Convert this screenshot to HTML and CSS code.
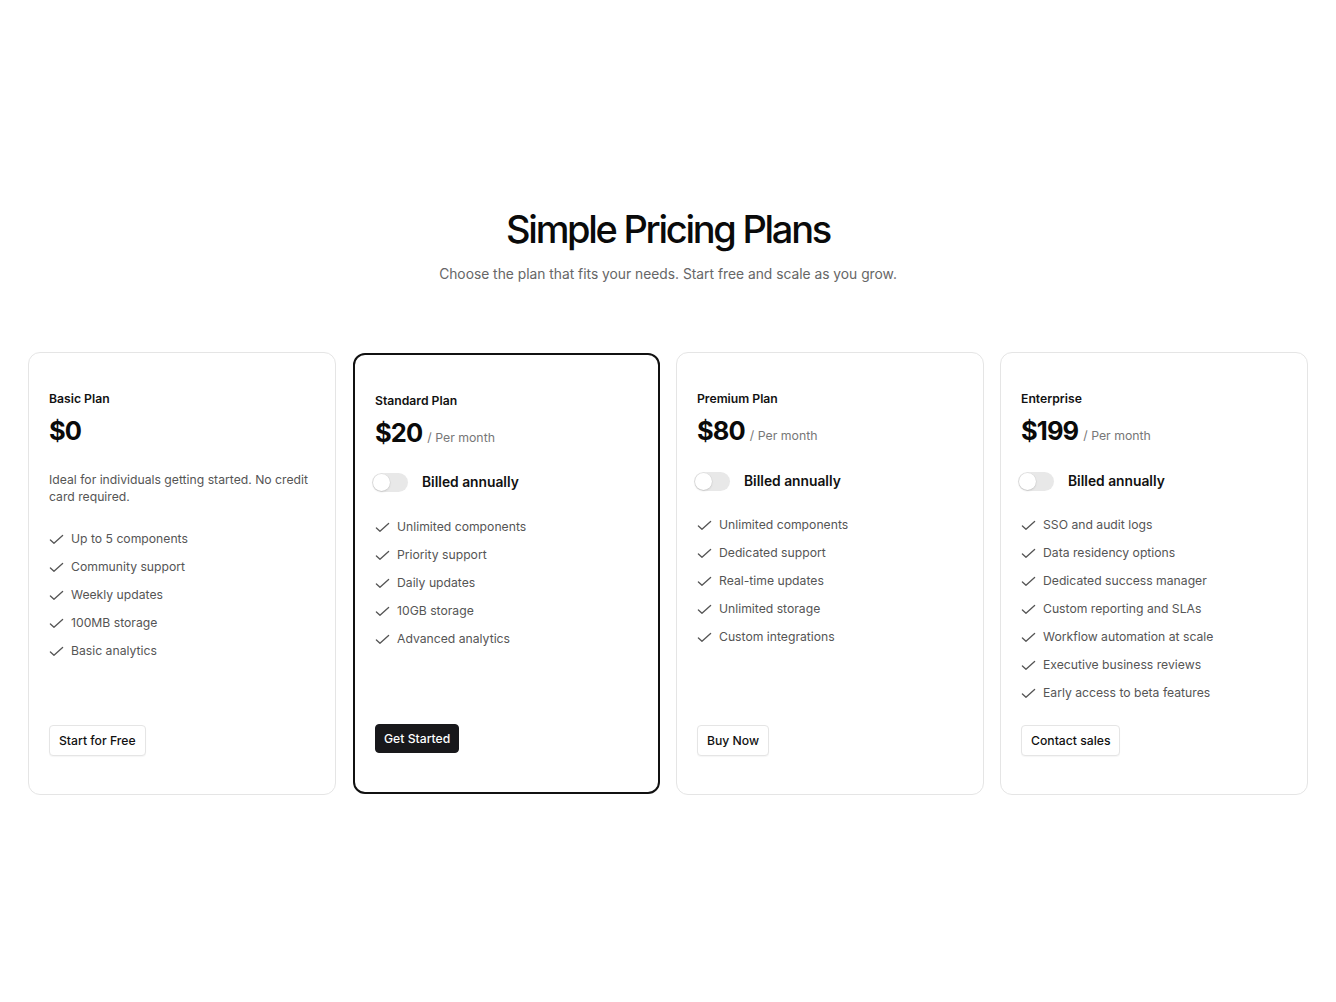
FILE: index.html
```html
<!DOCTYPE html>
<html lang="en">
<head>
<meta charset="utf-8">
<title>Simple Pricing Plans</title>
<link rel="stylesheet" href="styles.css">
</head>
<body>
<main class="page">
  <header class="hero">
    <h1 class="hero-title">Simple Pricing Plans</h1>
    <p class="hero-sub">Choose the plan that fits your needs. Start free and scale as you grow.</p>
  </header>
  <section class="plans">
    <article class="card card-basic">
      <h2 class="plan-name">Basic Plan</h2>
      <div class="price-row"><span class="price">$0</span></div>
      <p class="desc">Ideal for individuals getting started. No credit card required.</p>
      <ul class="features">
        <li><svg class="check" viewBox="0 0 16 16"><path d="M1.5 8.5l3.8 3.6L14.5 3.8"/></svg>Up to 5 components</li>
        <li><svg class="check" viewBox="0 0 16 16"><path d="M1.5 8.5l3.8 3.6L14.5 3.8"/></svg>Community support</li>
        <li><svg class="check" viewBox="0 0 16 16"><path d="M1.5 8.5l3.8 3.6L14.5 3.8"/></svg>Weekly updates</li>
        <li><svg class="check" viewBox="0 0 16 16"><path d="M1.5 8.5l3.8 3.6L14.5 3.8"/></svg>100MB storage</li>
        <li><svg class="check" viewBox="0 0 16 16"><path d="M1.5 8.5l3.8 3.6L14.5 3.8"/></svg>Basic analytics</li>
      </ul>
      <div class="actions"><button class="btn btn-outline">Start for Free</button></div>
    </article>
    <article class="card card-featured">
      <h2 class="plan-name">Standard Plan</h2>
      <div class="price-row"><span class="price">$20</span><span class="period">/ Per month</span></div>
      <label class="billing"><span class="switch"><span class="knob"></span></span><span class="billing-label">Billed annually</span></label>
      <ul class="features">
        <li><svg class="check" viewBox="0 0 16 16"><path d="M1.5 8.5l3.8 3.6L14.5 3.8"/></svg>Unlimited components</li>
        <li><svg class="check" viewBox="0 0 16 16"><path d="M1.5 8.5l3.8 3.6L14.5 3.8"/></svg>Priority support</li>
        <li><svg class="check" viewBox="0 0 16 16"><path d="M1.5 8.5l3.8 3.6L14.5 3.8"/></svg>Daily updates</li>
        <li><svg class="check" viewBox="0 0 16 16"><path d="M1.5 8.5l3.8 3.6L14.5 3.8"/></svg>10GB storage</li>
        <li><svg class="check" viewBox="0 0 16 16"><path d="M1.5 8.5l3.8 3.6L14.5 3.8"/></svg>Advanced analytics</li>
      </ul>
      <div class="actions"><button class="btn btn-solid">Get Started</button></div>
    </article>
    <article class="card">
      <h2 class="plan-name">Premium Plan</h2>
      <div class="price-row"><span class="price">$80</span><span class="period">/ Per month</span></div>
      <label class="billing"><span class="switch"><span class="knob"></span></span><span class="billing-label">Billed annually</span></label>
      <ul class="features">
        <li><svg class="check" viewBox="0 0 16 16"><path d="M1.5 8.5l3.8 3.6L14.5 3.8"/></svg>Unlimited components</li>
        <li><svg class="check" viewBox="0 0 16 16"><path d="M1.5 8.5l3.8 3.6L14.5 3.8"/></svg>Dedicated support</li>
        <li><svg class="check" viewBox="0 0 16 16"><path d="M1.5 8.5l3.8 3.6L14.5 3.8"/></svg>Real-time updates</li>
        <li><svg class="check" viewBox="0 0 16 16"><path d="M1.5 8.5l3.8 3.6L14.5 3.8"/></svg>Unlimited storage</li>
        <li><svg class="check" viewBox="0 0 16 16"><path d="M1.5 8.5l3.8 3.6L14.5 3.8"/></svg>Custom integrations</li>
      </ul>
      <div class="actions"><button class="btn btn-outline">Buy Now</button></div>
    </article>
    <article class="card">
      <h2 class="plan-name">Enterprise</h2>
      <div class="price-row"><span class="price">$199</span><span class="period">/ Per month</span></div>
      <label class="billing"><span class="switch"><span class="knob"></span></span><span class="billing-label">Billed annually</span></label>
      <ul class="features">
        <li><svg class="check" viewBox="0 0 16 16"><path d="M1.5 8.5l3.8 3.6L14.5 3.8"/></svg>SSO and audit logs</li>
        <li><svg class="check" viewBox="0 0 16 16"><path d="M1.5 8.5l3.8 3.6L14.5 3.8"/></svg>Data residency options</li>
        <li><svg class="check" viewBox="0 0 16 16"><path d="M1.5 8.5l3.8 3.6L14.5 3.8"/></svg>Dedicated success manager</li>
        <li><svg class="check" viewBox="0 0 16 16"><path d="M1.5 8.5l3.8 3.6L14.5 3.8"/></svg>Custom reporting and SLAs</li>
        <li><svg class="check" viewBox="0 0 16 16"><path d="M1.5 8.5l3.8 3.6L14.5 3.8"/></svg>Workflow automation at scale</li>
        <li><svg class="check" viewBox="0 0 16 16"><path d="M1.5 8.5l3.8 3.6L14.5 3.8"/></svg>Executive business reviews</li>
        <li><svg class="check" viewBox="0 0 16 16"><path d="M1.5 8.5l3.8 3.6L14.5 3.8"/></svg>Early access to beta features</li>
      </ul>
      <div class="actions"><button class="btn btn-outline">Contact sales</button></div>
    </article>
  </section>
</main>
</body>
</html>
```

FILE: styles.css
```css
* { box-sizing: border-box; }
html, body { margin: 0; padding: 0; background: #fff; }
body {
  font-family: Inter, "Noto Sans", "Liberation Sans", sans-serif;
  color: #111;
  -webkit-font-smoothing: antialiased;
}
.page {
  padding: 204px 28px 0;
}
.hero { text-align: center; }
.hero-title {
  margin: 0;
  font-size: 38px;
  line-height: 50px;
  font-weight: 500;
  letter-spacing: -0.06em;
  color: #0a0a0a;
}
.hero-sub {
  margin: 10px 0 0;
  font-size: 13.8px;
  line-height: 20px;
  color: #666;
}
.plans {
  margin-top: 68px;
  display: grid;
  grid-template-columns: repeat(4, 1fr);
  gap: 16px;
}
.card {
  display: flex;
  flex-direction: column;
  border: 1px solid #e5e5e5;
  border-radius: 12px;
  padding: 37px 20px 38px;
  min-height: 443px;
  background: #fff;
}
.card-featured {
  border: 2px solid #111;
  padding: 37px 20px 39px;
  margin: 1px 0 1px 1px;
  min-height: 441px;
}
.plan-name {
  margin: 0;
  font-size: 12.2px;
  line-height: 18px;
  font-weight: 600;
  color: #111;
}
.price-row {
  margin-top: 6px;
  display: flex;
  align-items: baseline;
  gap: 5px;
  height: 34px;
}
.price {
  font-size: 25.5px;
  line-height: 34px;
  font-weight: 700;
  letter-spacing: -0.035em;
  color: #0a0a0a;
}
.period {
  font-size: 12.3px;
  color: #777;
}
.desc {
  margin: 23px 0 0;
  font-size: 12.2px;
  line-height: 17px;
  color: #555;
}
.billing {
  margin-top: 22px;
  display: flex;
  align-items: center;
  gap: 14px;
  height: 22px;
}
.card-featured .billing { margin-top: 21px; }
.switch {
  position: relative;
  margin-left: -3px;
  width: 36px;
  height: 19px;
  border-radius: 10px;
  background: #e8e8e8;
  flex: none;
}
.knob {
  position: absolute;
  top: 1px;
  left: 1px;
  width: 17px;
  height: 17px;
  border-radius: 50%;
  background: #fff;
  box-shadow: 0 0 0 0.5px rgba(0,0,0,0.06), 0 1px 2px rgba(0,0,0,0.12);
}
.billing-label {
  font-size: 13.8px;
  font-weight: 600;
  color: #111;
}
.features {
  list-style: none;
  margin: 23px 0 0;
  padding: 0;
  display: flex;
  flex-direction: column;
  gap: 8px;
}
.card-basic .features { margin-top: 24px; }
.card-featured .features { margin-top: 24px; }
.features li {
  display: flex;
  align-items: center;
  gap: 7px;
  font-size: 12.2px;
  line-height: 20px;
  color: #555;
}
.check {
  width: 15px;
  height: 15px;
  flex: none;
  fill: none;
  stroke: #555;
  stroke-width: 1.4;
  stroke-linecap: round;
  stroke-linejoin: round;
}
.actions {
  margin-top: auto;
  padding-top: 20px;
}
.btn {
  font-family: inherit;
  font-size: 12.2px;
  font-weight: 500;
  line-height: 16px;
  border-radius: 4px;
  cursor: pointer;
}
.btn-outline {
  height: 31px;
  padding: 0 9px;
  background: #fff;
  color: #111;
  border: 1px solid #e5e5e5;
  box-shadow: 0 1px 1px rgba(0,0,0,0.04);
}
.btn-solid {
  height: 29px;
  padding: 0 8px;
  background: #18181b;
  color: #fff;
  border: 1px solid #18181b;
}
```
